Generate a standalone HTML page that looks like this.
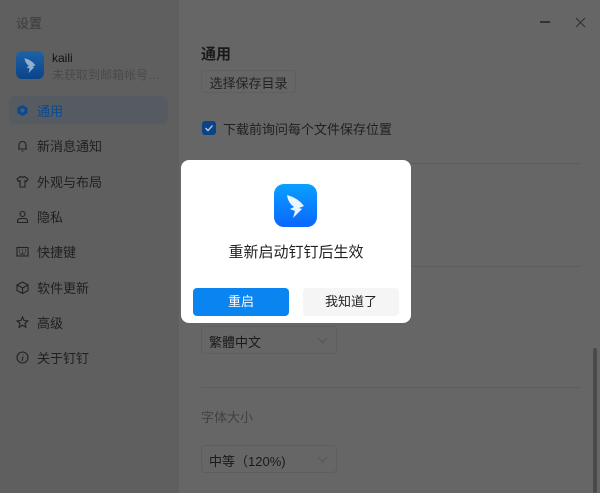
<!DOCTYPE html>
<html><head><meta charset="utf-8"><style>
*{margin:0;padding:0;box-sizing:border-box}
body{width:600px;height:493px;overflow:hidden;position:relative;background:#666;font-family:"Liberation Sans","Noto Sans CJK SC",sans-serif;color:#222}
.side{position:absolute;left:0;top:0;width:179px;height:493px;background:#5f5f5f}
.a{position:absolute;white-space:nowrap}
.nav{position:absolute;left:16px;font-size:13px;color:#1f1f1f;display:flex;align-items:center;gap:8px}
.nav svg{width:13px;height:13px}
.dd{position:absolute;left:201px;width:136px;height:28px;border:1px solid #5e5e5e;border-radius:4px;font-size:13px;color:#1a1a1a;padding:5px 7px}
.dd:after{content:"";position:absolute;right:10px;top:8px;width:6px;height:6px;border-right:1px solid #555;border-bottom:1px solid #555;transform:rotate(45deg)}
</style></head><body>
<div class="side">
<div class="a" style="left:16px;top:13px;font-size:13px;color:#3b3b3b">设置</div>
<div class="a" style="left:16px;top:51px;width:28px;height:28px;border-radius:6px;background:linear-gradient(#1e63a8,#0b4388)"><svg width="28" height="28" viewBox="0 0 43 43"><path d="M13 11 Q24 14 30 22 L25 24 L28 25 L19 34 L21 27 L16 25 L20 23 Q14 19 13 11Z" fill="#8fb0d0"/></svg></div>
<div class="a" style="left:52px;top:51px;font-size:12px;color:#111">kaili</div>
<div class="a" style="left:52px;top:66px;width:115px;overflow:hidden;text-overflow:ellipsis;font-size:12px;color:#4a4a4a">未获取到邮箱帐号信息...</div>
<div class="a" style="left:9px;top:96px;width:159px;height:28px;border-radius:6px;background:#565a61"></div>
<div class="nav" style="top:101px;color:#0a4a90"><svg viewBox="0 0 13 13"><path d="M6.5 1 L11.5 3.8 V9.2 L6.5 12 L1.5 9.2 V3.8Z" fill="#0a4a90"/><circle cx="6.5" cy="6.5" r="2" fill="#565a61"/></svg>通用</div>
<div class="nav" style="top:136px"><svg viewBox="0 0 13 13" fill="none" stroke="#222" stroke-width="1.1"><path d="M3 10V6a3.5 3.5 0 0 1 7 0v4H2h9M5.5 12h2"/></svg>新消息通知</div>
<div class="nav" style="top:172px"><svg viewBox="0 0 13 13" fill="none" stroke="#222" stroke-width="1.1"><path d="M4.5 1.5L1 4l1.5 2.5 1.5-.8V12h5V5.7l1.5.8L12 4 8.5 1.5q-2 1.5-4 0z"/></svg>外观与布局</div>
<div class="nav" style="top:207px"><svg viewBox="0 0 13 13" fill="none" stroke="#222" stroke-width="1.1"><circle cx="6.5" cy="4" r="2.5"/><path d="M1.5 12.5v-1.5q0-2.5 3-2.5h4q3 0 3 2.5v1.5z"/></svg>隐私</div>
<div class="nav" style="top:242px"><svg viewBox="0 0 13 13" fill="none" stroke="#222" stroke-width="1.1"><rect x="1" y="2.5" width="11" height="8.5"/><path d="M3 5h1M6 5h1M9 5h1M3 7h1M6 7h1M9 7h1M4 9h5"/></svg>快捷键</div>
<div class="nav" style="top:278px"><svg viewBox="0 0 13 13" fill="none" stroke="#222" stroke-width="1.1"><path d="M6.5 1L12 4v5.5L6.5 12.5 1 9.5V4zM1 4l5.5 3 5.5-3M6.5 7v5.5"/></svg>软件更新</div>
<div class="nav" style="top:313px"><svg viewBox="0 0 13 13" fill="none" stroke="#222" stroke-width="1.1"><path d="M6.5 1l1.6 3.5 3.8.4-2.9 2.6.9 3.8-3.4-2-3.4 2 .9-3.8L1.1 4.9l3.8-.4z"/></svg>高级</div>
<div class="nav" style="top:348px"><svg viewBox="0 0 13 13" fill="none" stroke="#222" stroke-width="1.1"><circle cx="6.5" cy="6.5" r="5.5"/><path d="M7 5.5L6 10M7.2 3.5v.5"/></svg>关于钉钉</div>
</div>
<div class="a" style="left:540px;top:21px;width:10px;height:1.5px;background:#333"></div>
<svg class="a" style="left:575px;top:17px" width="11" height="11" viewBox="0 0 11 11"><path d="M1 1L10 10M10 1L1 10" stroke="#333" stroke-width="1.2"/></svg>
<div class="a" style="left:201px;top:43px;font-size:15px;font-weight:bold;color:#1a1a1a">通用</div>
<div class="a" style="left:201px;top:70px;width:95px;height:23px;border:1px solid #5f5f5f;border-radius:4px;font-size:13px;color:#222;padding:2px 0;text-align:center">选择保存目录</div>
<div class="a" style="left:202px;top:121px;width:14px;height:14px;border-radius:3px;background:#0b4388"><svg width="14" height="14"><path d="M3.5 7l2.5 2.5 4.5-5" stroke="#ccc" stroke-width="1.3" fill="none"/></svg></div>
<div class="a" style="left:223px;top:119px;font-size:13px;color:#1f1f1f">下载前询问每个文件保存位置</div>
<div class="a" style="left:201px;top:163px;width:380px;height:1px;background:#5e5e5e"></div>
<div class="a" style="left:201px;top:266px;width:380px;height:1px;background:#5e5e5e"></div>
<div class="dd" style="top:326px">繁體中文</div>
<div class="a" style="left:201px;top:387px;width:380px;height:1px;background:#5e5e5e"></div>
<div class="a" style="left:201px;top:407px;font-size:13px;color:#424242">字体大小</div>
<div class="dd" style="top:445px">中等（120%)</div>
<div class="a" style="left:593px;top:348px;width:4px;height:145px;border-radius:2px;background:#4a4a4a"></div>
<div class="a" style="left:181px;top:160px;width:230px;height:163px;background:#fff;border-radius:8px">
<div class="a" style="left:93px;top:24px;width:43px;height:43px;border-radius:10px;background:linear-gradient(#0aa0ff,#0a66ff)"><svg width="43" height="43" viewBox="0 0 43 43"><path d="M13 11 Q24 14 30 22 L25 24 L28 25 L19 34 L21 27 L16 25 L20 23 Q14 19 13 11Z" fill="#fff" opacity=".92"/></svg></div>
<div class="a" style="left:0;width:230px;top:81px;text-align:center;font-size:15px;color:#222">重新启动钉钉后生效</div>
<div class="a" style="left:12px;top:128px;width:96px;height:28px;border-radius:4px;background:#0a84f0;color:#fff;font-size:13px;text-align:center;line-height:28px">重启</div>
<div class="a" style="left:122px;top:128px;width:96px;height:28px;border-radius:4px;background:#f5f5f5;color:#222;font-size:13px;text-align:center;line-height:28px">我知道了</div>
</div>
</body></html>
